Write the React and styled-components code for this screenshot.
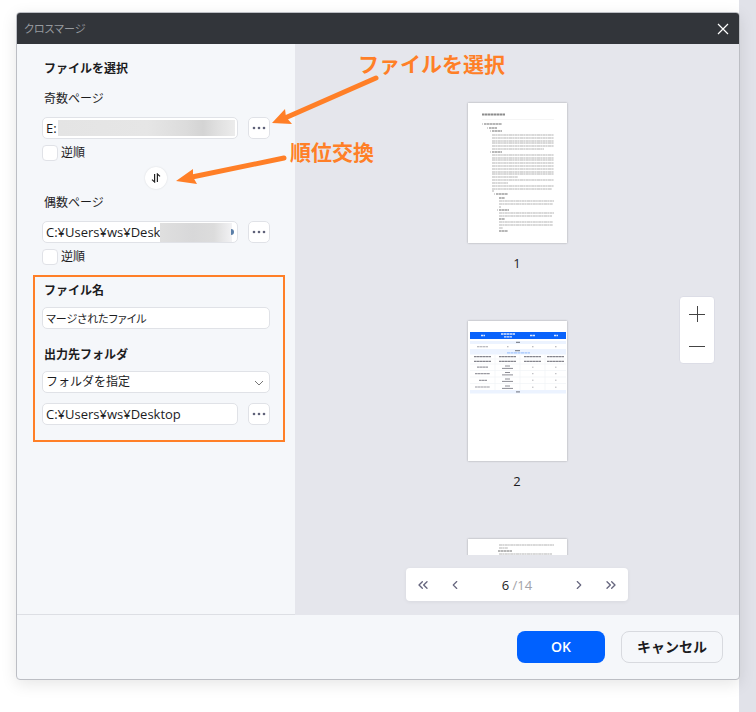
import { useState } from 'react';
import styled, { createGlobalStyle } from 'styled-components';
import { ChevronLeft, ChevronRight, ChevronsLeft, ChevronsRight } from 'lucide-react';

const PAGE_COUNT = 14;

// [x, y, width, kind]
const OUTLINE_LINES = [
  [16, 21, 18, 'head'],
  [21, 25, 8, 'head'],
  [24, 28, 10, 'head'],
  ...[32, 35, 38, 40, 43].map((y) => [24, y, 62, 'text']),
  [24, 46, 52, 'text'],
  [24, 49, 10, 'head'],
  ...[52, 55, 57, 60, 63, 66, 69, 71].map((y) => [24, y, 62, 'text']),
  [24, 74, 26, 'text'],
  [24, 77, 62, 'text'],
  [24, 80, 16, 'text'],
  [24, 83, 62, 'text'],
  [24, 86, 60, 'text'],
  [24, 88, 2, 'text'],
  [28, 91, 12, 'head'],
  [31, 95, 6, 'head'],
  [31, 98, 55, 'text'],
  [31, 101, 54, 'text'],
  [31, 104, 2, 'text'],
  [31, 107, 10, 'head'],
  [31, 110, 55, 'text'],
  [31, 113, 53, 'text'],
  [31, 116, 6, 'head'],
  [31, 119, 54, 'text'],
  [31, 122, 54, 'text'],
  [31, 125, 4, 'text'],
  [31, 128, 9, 'head'],
];

const CONTINUED_LINES = [
  [31, 6, 55, 'text'],
  [31, 9, 9, 'text'],
  [30, 12, 14, 'head'],
  [31, 15, 53, 'text'],
];

function TextLines({ lines }) {
  return lines.map(([x, y, width, kind]) => (
    <path
      key={`${x}-${y}`}
      d={`M${x} ${y}h${width}`}
      stroke={kind === 'head' ? '#a0a0a0' : '#cdcdcd'}
      strokeWidth={kind === 'head' ? 1.4 : 1.3}
      strokeDasharray={kind === 'head' ? '2.6 0.4' : '3.2 0.3 1.7 0.4'}
    />
  ));
}

function OutlinePage() {
  return (
    <Sheet viewBox="0 0 99 140" aria-hidden="true">
      <path d="M14 11.5h23" stroke="#8c8c8c" strokeWidth="1.8" strokeDasharray="2.6 0.4" />
      <path d="M14 16.5h72" stroke="#f2f2f2" strokeWidth="0.8" />
      <path d="M14 21h1M19 25h1M22 28h1M22 49h1M26 91h1M29 107h1" stroke="#aaa" />
      <TextLines lines={OUTLINE_LINES} />
    </Sheet>
  );
}

function TablePage() {
  return (
    <Sheet viewBox="0 0 99 140" aria-hidden="true">
      <path d="M2 11h96v7H2z" fill="#0a63fb" />
      <path d="M2 20h96v3H2zM2 28h96v5.5H2zM2 69h96v3.5H2z" fill="#ecf3ff" />
      <path
        d="M2 38h96M2 43h96M2 49.5h96M2 56h96M2 62.5h96M27 34v35M52 34v35M77 34v35"
        stroke="#f1f3f7"
        strokeWidth="0.7"
      />
      <path
        d="M13 14.5h4M33 13h14M36 15.8h8M62 14.5h5M86 14.5h4"
        stroke="#dce8ff"
        strokeWidth="1.3"
        strokeDasharray="2.6 0.4"
      />
      <path d="M48 21.4h4M47 29.7h5M48 70.8h4" stroke="#858a95" strokeWidth="1.2" />
      <path d="M39 31.9h23" stroke="#8fbafc" strokeWidth="1" strokeDasharray="3 0.5" />
      <path
        d="M9 25.8h11M39 25.8h1.5M64 25.8h1.5M87 25.8h1.5"
        stroke="#a8a8ae"
        strokeWidth="1.1"
        strokeDasharray="2.6 0.4"
      />
      <path
        d="M6 35.7h17M31 35.7h17M56 35.7h17M79 35.7h17M6 40.4h17M31 40.4h17M56 40.4h17M79 40.4h17"
        stroke="#85858d"
        strokeWidth="1.2"
        strokeDasharray="2.7 0.3"
      />
      <path
        d="M9 46.2h11M7 52.7h15M11 59.3h8M7 66h15"
        stroke="#9a9aa1"
        strokeWidth="1.2"
        strokeDasharray="2.7 0.3"
      />
      {[45, 51.5, 58, 65].map((y) => (
        <g key={y} stroke="#8c8c94" strokeWidth="1">
          <path d={`M37 ${y}h5M34 ${y + 2.4}h11`} />
          <path d={`M64 ${y + 1.2}h1.5M87 ${y + 1.2}h1.5`} stroke="#b5b5ba" />
        </g>
      ))}
    </Sheet>
  );
}

function ContinuedPage() {
  return (
    <Sheet viewBox="0 0 99 140" aria-hidden="true">
      <TextLines lines={CONTINUED_LINES} />
    </Sheet>
  );
}

function BrowseButton({ label }) {
  return (
    <SmallButton type="button" aria-label={label}>
      <svg width="14" height="4" viewBox="0 0 14 4" fill="#5f6279">
        <circle cx="2" cy="2" r="1.3" />
        <circle cx="7" cy="2" r="1.3" />
        <circle cx="12" cy="2" r="1.3" />
      </svg>
    </SmallButton>
  );
}

function Annotations() {
  return (
    <>
      <Arrows width="400" height="200" viewBox="0 0 400 200" aria-hidden="true">
        <path d="M376 78L285 118M284 158L192 177" />
        <polygon points="272,123 285,109 286,117 292,124" />
        <polygon points="176,181 193,169 193,177 197,184" />
      </Arrows>
      <Note $left={358} $top={48}>
        ファイルを選択
      </Note>
      <Note $left={290} $top={136}>
        順位交換
      </Note>
    </>
  );
}

export default function App() {
  const [page, setPage] = useState(6);
  const [oddPath, setOddPath] = useState('E:');
  const [evenPath, setEvenPath] = useState('C:¥Users¥ws¥Desktop');
  const [fileName, setFileName] = useState('マージされたファイル');
  const [outputPath, setOutputPath] = useState('C:¥Users¥ws¥Desktop');

  const goTo = (next) => setPage(Math.min(PAGE_COUNT, Math.max(1, next)));

  return (
    <Desktop>
      <GlobalStyle />
      <Dialog role="dialog" aria-labelledby="dialog-title">
        <TitleBar>
          <Title id="dialog-title">クロスマージ</Title>
          <CloseButton type="button" aria-label="閉じる">
            <svg width="12" height="12" viewBox="0 0 12 12" stroke="#fff" strokeWidth="1.2">
              <path d="M1 1l10 10M11 1L1 11" />
            </svg>
          </CloseButton>
        </TitleBar>

        <Body>
          <Sidebar>
            <Section>
              <Heading>ファイルを選択</Heading>
              <Label htmlFor="odd">奇数ページ</Label>
              <Row>
                <Field>
                  <TextInput id="odd" value={oddPath} onChange={(e) => setOddPath(e.target.value)} />
                  <OddMask />
                </Field>
                <BrowseButton label="奇数ページを参照" />
              </Row>
              <CheckLabel>
                <Checkbox type="checkbox" />
                逆順
              </CheckLabel>
              <SwapButton type="button" aria-label="順位交換">
                <svg width="10" height="10" viewBox="0 0 10 10" fill="none" stroke="#222" strokeWidth="1.2">
                  <path d="M3.6 1v8L1 6.6M6.4 9V1L9 3.4" />
                </svg>
              </SwapButton>
              <EvenLabel htmlFor="even">偶数ページ</EvenLabel>
              <Row>
                <Field>
                  <TextInput id="even" value={evenPath} onChange={(e) => setEvenPath(e.target.value)} />
                  <EvenMask />
                </Field>
                <BrowseButton label="偶数ページを参照" />
              </Row>
              <CheckLabel>
                <Checkbox type="checkbox" />
                逆順
              </CheckLabel>
            </Section>

            <OutputSection>
              <Heading as="label" htmlFor="name">
                ファイル名
              </Heading>
              <OutputRow>
                <TextInput
                  id="name"
                  $proportional
                  value={fileName}
                  onChange={(e) => setFileName(e.target.value)}
                />
              </OutputRow>
              <FolderHeading as="label" htmlFor="folder">
                出力先フォルダ
              </FolderHeading>
              <OutputRow>
                <Field>
                  <Select id="folder">
                    <option>フォルダを指定</option>
                  </Select>
                  <SelectArrow width="10" height="6" viewBox="0 0 10 6">
                    <path d="M1 1l4 4 4-4" />
                  </SelectArrow>
                </Field>
              </OutputRow>
              <PathRow>
                <TextInput
                  aria-label="出力先のパス"
                  value={outputPath}
                  onChange={(e) => setOutputPath(e.target.value)}
                />
                <BrowseButton label="出力先を参照" />
              </PathRow>
            </OutputSection>
          </Sidebar>

          <Preview>
            <Pages>
              <Thumb>
                <OutlinePage />
                <figcaption>1</figcaption>
              </Thumb>
              <Thumb>
                <TablePage />
                <figcaption>2</figcaption>
              </Thumb>
              <Thumb>
                <ContinuedPage />
              </Thumb>
            </Pages>
            <Pager>
              <PagerButton type="button" aria-label="最初のページ" onClick={() => goTo(1)}>
                <ChevronsLeft size={16} />
              </PagerButton>
              <PagerButton type="button" aria-label="前のページ" onClick={() => goTo(page - 1)}>
                <ChevronLeft size={14} />
              </PagerButton>
              <PageNumber>
                {page} <span>/{PAGE_COUNT}</span>
              </PageNumber>
              <PagerButton type="button" aria-label="次のページ" onClick={() => goTo(page + 1)}>
                <ChevronRight size={14} />
              </PagerButton>
              <PagerButton type="button" aria-label="最後のページ" onClick={() => goTo(PAGE_COUNT)}>
                <ChevronsRight size={16} />
              </PagerButton>
            </Pager>
            <ZoomControls>
              <ZoomButton type="button" aria-label="拡大">
                <svg width="16" height="16" viewBox="0 0 16 16" stroke="#444" strokeWidth="1">
                  <path d="M0 8.5h16M8.5 0v16" />
                </svg>
              </ZoomButton>
              <ZoomButton type="button" aria-label="縮小">
                <svg width="16" height="16" viewBox="0 0 16 16" stroke="#444" strokeWidth="1">
                  <path d="M0 8.5h16" />
                </svg>
              </ZoomButton>
            </ZoomControls>
          </Preview>
        </Body>

        <Footer>
          <OkButton type="button">OK</OkButton>
          <CancelButton type="button">キャンセル</CancelButton>
        </Footer>
      </Dialog>
      <Annotations />
    </Desktop>
  );
}

const GlobalStyle = createGlobalStyle`
  * {
    box-sizing: border-box;
  }
  body {
    margin: 0;
    color: #1c1c1e;
    font: 12px/20px 'Open Sans', 'Noto Sans CJK JP', sans-serif;
  }
  button,
  input,
  select {
    font: inherit;
    color: inherit;
  }
  button {
    display: flex;
    align-items: center;
    justify-content: center;
    padding: 0;
    border: 0;
    cursor: pointer;
  }
`;

const Desktop = styled.main`
  position: relative;
  display: flex;
  min-height: 100vh;
  padding: 12px 16px 32px;
  background: linear-gradient(to left, #e1e2e9 17px, #fff 17px);
`;

const Dialog = styled.section`
  flex: 1;
  display: flex;
  flex-direction: column;
  overflow: hidden;
  background: #f5f7fa;
  border: 1px solid #bcbec4;
  border-radius: 4px;
  box-shadow: 0 4px 16px rgba(0, 0, 0, 0.1);
`;

const TitleBar = styled.header`
  display: flex;
  align-items: center;
  justify-content: space-between;
  height: 31px;
  padding: 0 6px 0 7px;
  background: #32353a;
`;

const Title = styled.h1`
  margin: 0;
  font-size: 11px;
  font-weight: 400;
  color: #979a9f;
  font-feature-settings: 'palt';
`;

const CloseButton = styled.button`
  width: 20px;
  height: 20px;
  background: none;
`;

const Body = styled.div`
  flex: 1;
  display: grid;
  grid-template-columns: 278px 1fr;
`;

const Sidebar = styled.aside`
  padding: 13px 10px 0 16px;
  border-bottom: 1px solid #dddfe4;
`;

const Section = styled.section`
  display: flex;
  flex-direction: column;
  margin-bottom: 8px;
  padding: 2px 15px 0 9px;
`;

const OutputSection = styled(Section)`
  padding: 4px 13px 15px 7px;
  border: 2px solid #ff7f27;
`;

const Heading = styled.h2`
  margin: 0 2px;
  font-size: 12px;
  font-weight: 700;
`;

const FolderHeading = styled(Heading)`
  margin-top: 16px;
`;

const Label = styled.label`
  margin: 10px 2px 0;
`;

const EvenLabel = styled(Label)`
  margin-top: 4px;
`;

const Row = styled.div`
  display: flex;
  gap: 10px;
  margin-top: 8px;
`;

const OutputRow = styled(Row)`
  margin-top: 6px;
`;

const PathRow = styled(Row)`
  margin-top: 10px;
`;

const Field = styled.div`
  position: relative;
  flex: 1;
  display: flex;
`;

const TextInput = styled.input`
  flex: 1;
  min-width: 0;
  height: 22px;
  padding: 0 3px;
  background: #fff;
  border: 1px solid #e0e2e7;
  border-radius: 5px;
  font-size: ${({ $proportional }) => ($proportional ? 11 : 13)}px;
  font-feature-settings: ${({ $proportional }) => ($proportional ? "'palt'" : 'normal')};
`;

const OddMask = styled.span`
  position: absolute;
  inset: 3px 3px 3px 16px;
  background: linear-gradient(to right, #e4e4e4, #e6e6e6 50%, #dcdcdc 72%, #d4d4d4 82%, #e0e0e0 90%, #ececec);
`;

const EvenMask = styled.span`
  position: absolute;
  inset: 2px 6px 1px 118px;
  background: linear-gradient(to right, #dfdfdf, #d8d8d9 45%, #dcdcdc 75%, #f2f2f4);

  &::after {
    content: '';
    position: absolute;
    top: 6px;
    right: -2px;
    width: 3px;
    height: 6px;
    background: #5b7fa8;
    border-radius: 0 3px 3px 0;
  }
`;

const Select = styled.select`
  flex: 1;
  height: 22px;
  padding: 0 24px 0 3px;
  appearance: none;
  background: #fff;
  border: 1px solid #e0e2e7;
  border-radius: 5px;
`;

const SelectArrow = styled.svg`
  position: absolute;
  top: 9px;
  right: 6px;
  fill: none;
  stroke: #777;
  pointer-events: none;
`;

const SmallButton = styled.button`
  width: 22px;
  height: 22px;
  background: #fff;
  border: 1px solid #e0e2e7;
  border-radius: 5px;
`;

const CheckLabel = styled.label`
  display: flex;
  align-items: center;
  gap: 3px;
  margin-top: 4px;
`;

const Checkbox = styled.input`
  appearance: none;
  width: 16px;
  height: 16px;
  margin: 0;
  background: #fff;
  border: 1px solid #e0e2e7;
  border-radius: 4px;

  &:checked {
    background: #0061ff;
  }
`;

const SwapButton = styled.button`
  align-self: center;
  width: 22px;
  height: 22px;
  margin-top: 4px;
  background: #fff;
  border-radius: 50%;
  box-shadow: 0 0 2px rgba(0, 0, 0, 0.12);
`;

const Preview = styled.section`
  position: relative;
  display: flex;
  flex-direction: column;
  align-items: center;
  padding-bottom: 14px;
  background: #e5e6ec;
`;

const Pages = styled.div`
  flex: 1 1 0;
  display: flex;
  flex-direction: column;
  align-items: center;
  gap: 48px;
  padding: 59px 20px 0;
  overflow: hidden;
`;

const Thumb = styled.figure`
  flex: none;
  display: flex;
  flex-direction: column;
  gap: 10px;
  margin: 0;
  font-size: 13px;
  text-align: center;
`;

const Sheet = styled.svg`
  display: block;
  width: 99px;
  height: 140px;
  fill: none;
  background: #fff;
  box-shadow: 0 0 2px rgba(0, 0, 0, 0.3);
`;

const Pager = styled.nav`
  display: flex;
  align-items: center;
  gap: 16px;
  width: 222px;
  height: 33px;
  margin-top: 13px;
  padding: 0 9px;
  background: #fff;
  border-radius: 4px;
  box-shadow: 0 1px 4px rgba(0, 0, 0, 0.06);
`;

const PagerButton = styled.button`
  width: 16px;
  height: 24px;
  color: #66667e;
  background: none;
`;

const PageNumber = styled.span`
  flex: 1;
  font-size: 13px;
  text-align: center;

  span {
    color: #a3a3a8;
  }
`;

const ZoomControls = styled.div`
  position: absolute;
  top: 50%;
  right: 24px;
  width: 36px;
  padding: 1px 0;
  background: #fff;
  border: 1px solid #dcdde6;
  border-radius: 4px;
  transform: translateY(-50%);
`;

const ZoomButton = styled.button`
  width: 100%;
  height: 32px;
  background: none;
`;

const Footer = styled.footer`
  display: flex;
  align-items: center;
  justify-content: flex-end;
  gap: 16px;
  height: 64px;
  padding: 0 16px;
`;

const OkButton = styled.button`
  width: 88px;
  height: 32px;
  color: #fff;
  font-size: 14px;
  font-weight: 600;
  background: #0061ff;
  border-radius: 8px;
`;

const CancelButton = styled(OkButton)`
  width: 102px;
  color: #1c1c1e;
  background: transparent;
  border: 1px solid #d8dadf;
`;

const Arrows = styled.svg`
  position: absolute;
  top: 0;
  left: 0;
  fill: #ff7f27;
  pointer-events: none;

  path {
    stroke: #ff7f27;
    stroke-width: 5;
    stroke-linecap: round;
  }
`;

const Note = styled.strong`
  position: absolute;
  top: ${({ $top }) => $top}px;
  left: ${({ $left }) => $left}px;
  color: #ff7f27;
  font-size: 21px;
  line-height: 32px;
  pointer-events: none;
`;
